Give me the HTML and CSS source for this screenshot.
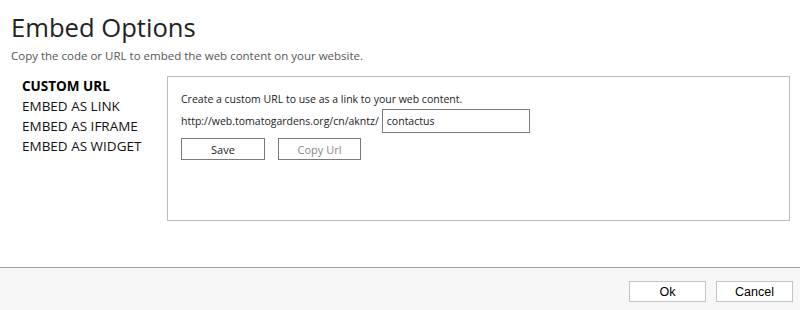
FILE: index.html
```html
<!DOCTYPE html>
<html lang="en">
<head>
    <meta charset="UTF-8">
    <title>Embed Options</title>
    <link rel="stylesheet" href="styles.css">
</head>

<body>
    <!--header-->
    <header class="hd">
        <h1 class="tit">Embed Options</h1>
        <p class="sub">Copy the code or URL to embed the web content on your website.</p>
    </header>

    <!--main-->
    <div class="main">
        <ul class="menu">
            <li class="on">CUSTOM URL</li>
            <li>EMBED AS LINK</li>
            <li>EMBED AS IFRAME</li>
            <li>EMBED AS WIDGET</li>
        </ul>

        <section class="panel">
            <p class="desc">Create a custom URL to use as a link to your web content.</p>
            <div class="url">
                <span class="base">http://web.tomatogardens.org/cn/akntz/</span>
                <input class="inp" type="text" value="contactus">
            </div>
            <div class="btns">
                <button class="btn">Save</button>
                <button class="btn dis">Copy Url</button>
            </div>
        </section>
    </div>

    <!--footer-->
    <footer class="ft">
        <button class="fbtn">Ok</button>
        <button class="fbtn">Cancel</button>
    </footer>
</body>
</html>
```

FILE: styles.css
```css
html,
body,
ul,
h1,
p {
    margin: 0;
    padding: 0;
}

body {
    width: 800px;
    height: 310px;
    display: flex;
    flex-direction: column;
    font-family: "Open Sans", "Noto Sans", sans-serif;
    color: #222;
    background: #fff;
}

/*header*/
.hd {
    padding: 9px 0 0 11px;
}

.tit {
    font-size: 25.6px;
    font-weight: normal;
    line-height: 38px;
    color: #222;
}

.sub {
    font-size: 11.5px;
    line-height: 18px;
    color: #555;
}

/*main*/
.main {
    flex: 1;
    display: flex;
    padding: 11px 0 0 22px;
}

.menu {
    list-style: none;
    width: 145px;
    font-size: 13.5px;
    line-height: 20px;
    color: #111;
}

.menu .on {
    font-weight: bold;
    color: #000;
}

.panel {
    width: 623px;
    height: 145px;
    box-sizing: border-box;
    border: 1px solid #bcbcbc;
    padding: 14px 0 0 13px;
    font-size: 10.5px;
}

.desc {
    line-height: 16px;
}

.url {
    display: flex;
    align-items: center;
    gap: 3px;
    margin-top: 2px;
}

.inp {
    width: 148px;
    height: 24px;
    box-sizing: border-box;
    border: 1px solid #7a7a7a;
    padding: 0 4px;
    font: 10.5px "Open Sans", sans-serif;
    color: #222;
    outline: none;
}

.btns {
    display: flex;
    gap: 13px;
    margin-top: 5px;
}

.btn {
    width: 84px;
    height: 22px;
    border: 1px solid #7a7a7a;
    background: #fff;
    font: 11px "Open Sans", sans-serif;
    color: #222;
    padding: 0;
}

.btn.dis {
    width: 83px;
    color: #888;
}

/*footer*/
.ft {
    height: 43px;
    box-sizing: border-box;
    border-top: 1px solid #a5a5a5;
    background: #f7f7f7;
    display: flex;
    justify-content: flex-end;
    align-items: flex-start;
    gap: 10px;
    padding: 13px 7px 0 0;
}

.fbtn {
    width: 77px;
    height: 21px;
    border: 1px solid #c4c4c4;
    background: #fff;
    font: 12.5px "Liberation Sans", Arial, sans-serif;
    color: #000;
    padding: 0;
}
```
